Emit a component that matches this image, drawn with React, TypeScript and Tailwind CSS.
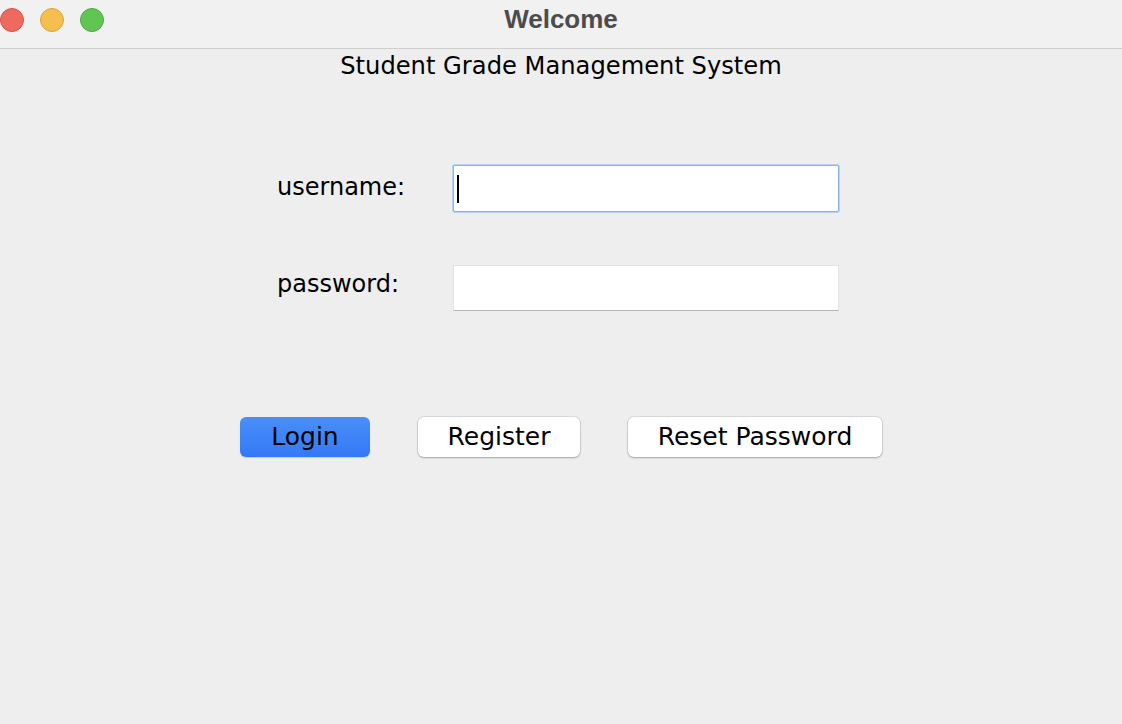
export default function App() {
  return (
    <div className="w-[1122px] h-[724px] flex flex-col bg-[#eeeeee] overflow-hidden" style={{ fontFamily: '"DejaVu Sans", sans-serif' }}>
      {/* title bar */}
      <div className="h-[49px] shrink-0 bg-[#f1f1f1] border-b border-[#cfcfcf] relative flex items-center justify-center">
        <div className="absolute left-0 top-[8px] flex gap-[16px]">
          <span className="w-[24px] h-[24px] rounded-full bg-[#ee6a5e] border border-[#d65447]" />
          <span className="w-[24px] h-[24px] rounded-full bg-[#f5bf4f] border border-[#dea236]" />
          <span className="w-[24px] h-[24px] rounded-full bg-[#61c554] border border-[#4ea83f]" />
        </div>
        <span className="text-[26px] font-bold text-[#4c4c4c] -mt-[10px]" style={{ fontFamily: '"Liberation Sans", sans-serif' }}>Welcome</span>
      </div>

      <div className="flex justify-center pt-[2px]">
        <h1 className="text-[24.2px] text-black leading-[30px]">Student Grade Management System</h1>
      </div>

      <div className="flex flex-col pl-[277px] pt-[84px] gap-[53px]">
        <div className="flex items-center">
          <label className="w-[176px] text-[24px] text-black -mt-[3px]">username:</label>
          <div className="w-[386px] h-[47px] bg-white border border-[#8db3ec] shadow-[0_0_0_1px_#b9d1f5] rounded-[2px] flex items-center pl-[3px]">
            <span className="w-[2px] h-[28px] bg-black" />
          </div>
        </div>
        <div className="flex items-center">
          <label className="w-[176px] text-[24px] text-black -mt-[9px]">password:</label>
          <div className="w-[386px] h-[46px] bg-white border border-[#e2e2e2] border-b-[#b5b5b5]" />
        </div>
      </div>

      <div className="flex pl-[240px] pt-[106px] gap-[48px]">
        <button className="w-[130px] h-[40px] rounded-[6px] bg-gradient-to-b from-[#4a8ff8] to-[#3478f6] text-[25px] text-black shadow-[0_1px_1px_rgba(0,0,0,0.15)]">Login</button>
        <button className="w-[162px] h-[40px] rounded-[6px] bg-white text-[25px] text-black shadow-[0_0_0_1px_rgba(0,0,0,0.08),0_1px_2px_rgba(0,0,0,0.25)]">Register</button>
        <button className="w-[254px] h-[40px] rounded-[6px] bg-white text-[25px] text-black shadow-[0_0_0_1px_rgba(0,0,0,0.08),0_1px_2px_rgba(0,0,0,0.25)]">Reset Password</button>
      </div>
    </div>
  );
}
